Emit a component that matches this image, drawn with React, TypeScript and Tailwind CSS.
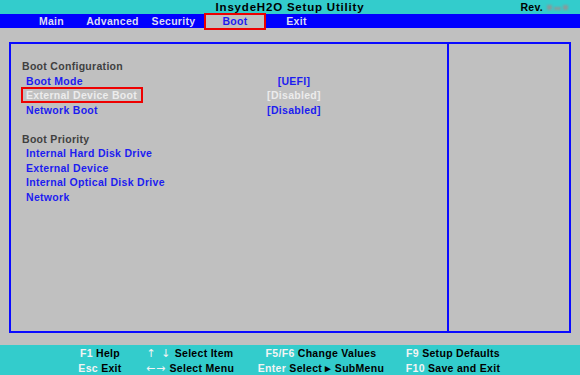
import React from 'react';

const tabs = ['Main', 'Advanced', 'Security', 'Boot', 'Exit'];

const footer = [
  [
    ['F1', 'Help'],
    ['↑ ↓', 'Select Item'],
    ['F5/F6', 'Change Values'],
    ['F9', 'Setup Defaults'],
  ],
  [
    ['Esc', 'Exit'],
    ['←→', 'Select Menu'],
    ['Enter', 'Select ▸ SubMenu'],
    ['F10', 'Save and Exit'],
  ],
];

function Row({
  label,
  value,
  selected,
  heading,
}: {
  label?: string;
  value?: string;
  selected?: boolean;
  heading?: boolean;
}) {
  if (heading) {
    return <div className="h-[14.5px] text-[#404040]">{label}</div>;
  }
  return (
    <div className="flex h-[14.5px]">
      <div className="w-[236px] pl-[4px]">
        {label && (
          <span className={`relative ${selected ? 'text-[#ececec]' : 'text-[#1c1cf0]'}`}>
            {selected && (
              <span className="absolute -top-[2px] -bottom-[2px] -left-[5px] -right-[6px] border-2 border-[#ee0000]" />
            )}
            <span className="relative">{label}</span>
          </span>
        )}
      </div>
      {value && (
        <div className={`w-[72px] text-center ${selected ? 'text-[#ececec]' : 'text-[#1c1cf0]'}`}>
          {value}
        </div>
      )}
    </div>
  );
}

function Key({ k }: { k: string }) {
  if (k.includes('↑') || k.includes('←')) {
    return (
      <span className="text-[#f4f4f4] font-normal font-['DejaVu_Sans',sans-serif] text-[11px] tracking-[1px]">
        {k}
      </span>
    );
  }
  return <span className="text-[#f4f4f4]">{k}</span>;
}

export default function App() {
  return (
    <div className="w-[580px] h-[375px] bg-[#c0c0c0] flex flex-col font-['Liberation_Sans',Arial,sans-serif] text-[10.5px] font-bold tracking-[0.3px] leading-[14.5px] overflow-hidden">
      {/* title */}
      <div className="h-[14px] bg-[#33cccc] relative flex items-center justify-center text-black leading-[14px]">
        <span className="text-[11.5px] tracking-[0.8px]">InsydeH2O Setup Utility</span>
        <div className="absolute right-[12px] top-0 h-[14px] flex items-center gap-[4px]">
          <span>Rev.</span>
          <span className="flex items-center gap-[2px] blur-[1px]">
            <span className="w-[5px] h-[5px] bg-[#8a9a9a]" />
            <span className="w-[7px] h-[3px] mt-[3px] bg-[#8a9a9a]" />
            <span className="w-[5px] h-[5px] bg-[#8a9a9a]" />
          </span>
        </div>
      </div>

      {/* menu */}
      <div className="h-[14px] bg-[#0000ff] flex items-start pl-[21px] leading-[14px]">
        {tabs.map((t) =>
          t === 'Boot' ? (
            <div
              key={t}
              className="relative z-10 w-[62px] h-[17px] -mt-[1px] border-2 border-[#ee0000] bg-[#c0c0c0] text-[#1c1cf0] text-center leading-[13px]"
            >
              {t}
            </div>
          ) : (
            <div key={t} className="w-[61px] text-center text-[#dcdcf4]">
              {t}
            </div>
          )
        )}
      </div>

      {/* body */}
      <div className="flex-1 pt-[14px] px-[9px] pb-[12px] flex">
        <div className="flex-1 flex border-2 border-[#0a0aff]">
          <div className="flex-1 border-r-2 border-[#0a0aff] pt-[15px] pl-[11px]">
            <Row heading label="Boot Configuration" />
            <Row label="Boot Mode" value="[UEFI]" />
            <Row label="External Device Boot" value="[Disabled]" selected />
            <Row label="Network Boot" value="[Disabled]" />
            <Row />
            <Row heading label="Boot Priority" />
            <Row label="Internal Hard Disk Drive" />
            <Row label="External Device" />
            <Row label="Internal Optical Disk Drive" />
            <Row label="Network" />
          </div>
          <div className="w-[120px]" />
        </div>
      </div>

      {/* footer */}
      <div className="h-[30px] bg-[#33cccc] flex flex-col pt-[1px] text-black leading-[14px]">
        {footer.map((row, i) => (
          <div key={i} className="grid grid-cols-[80px_100px_162px_102px] ml-[60px]">
            {row.map(([k, d]) => (
              <div key={k} className="text-center whitespace-nowrap">
                <Key k={k} /> {d}
              </div>
            ))}
          </div>
        ))}
      </div>
    </div>
  );
}
